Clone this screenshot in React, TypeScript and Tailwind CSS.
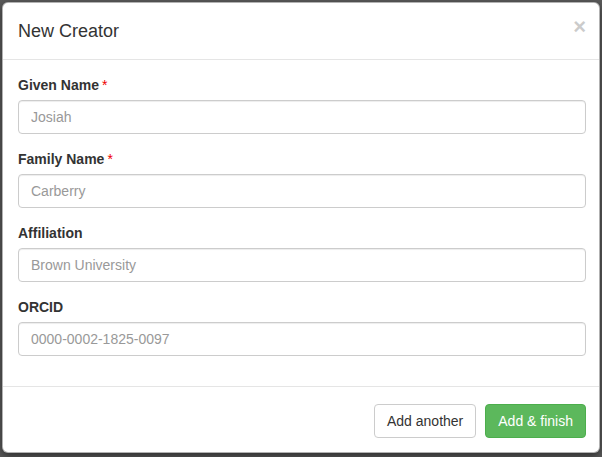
import React from 'react';

interface FieldProps {
    label: string;
    placeholder: string;
    required?: boolean;
}

function Field(props: FieldProps) {
    return <div className="mb-[15px]">
        <label className="mb-[5px] block text-[14px] font-bold leading-[20px] text-[#333]">
            {props.label}
            {props.required && <span className="ml-[3px] font-normal text-[#e00]">*</span>}
        </label>
        <input
            className="block h-[34px] w-full rounded-[4px] border border-[#ccc] px-[12px] text-[14px] text-[#555] shadow-[inset_0_1px_1px_rgba(0,0,0,0.075)] outline-none placeholder:text-[#999]"
            placeholder={props.placeholder}
        />
    </div>
}

export default function App() {
    return <div className="h-[457px] w-[602px] overflow-hidden bg-[#5a5a5a] p-[2px] font-['Liberation_Sans',Arial,sans-serif]">
        <div className="h-[451px] w-[598px] rounded-[6px] border border-[rgba(0,0,0,0.3)] bg-white shadow-[0_3px_9px_rgba(0,0,0,0.5)]">
            <div className="flex items-center justify-between border-b border-[#e5e5e5] py-[15px] pl-[15px] pr-[13px]">
                <h4 className="text-[18px] leading-[26px] text-[#333]">New Creator</h4>
                <button className="-mt-[9px] text-[22px] font-bold leading-none text-[#000] opacity-20">×</button>
            </div>
            <div className="py-[15px] pl-[15px] pr-[13px]">
                <Field label="Given Name" placeholder="Josiah" required={true} />
                <Field label="Family Name" placeholder="Carberry" required={true} />
                <Field label="Affiliation" placeholder="Brown University" />
                <Field label="ORCID" placeholder="0000-0002-1825-0097" />
            </div>
            <div className="flex justify-end gap-[9px] border-t border-[#e5e5e5] pb-[15px] pl-[15px] pr-[13px] pt-[17px]">
                <button className="h-[34px] rounded-[4px] border border-[#ccc] bg-white px-[12px] text-[14px] text-[#333]">Add another</button>
                <button className="h-[34px] rounded-[4px] border border-[#4cae4c] bg-[#5cb85c] px-[12px] text-[14px] text-white">Add &amp; finish</button>
            </div>
        </div>
    </div>
}
